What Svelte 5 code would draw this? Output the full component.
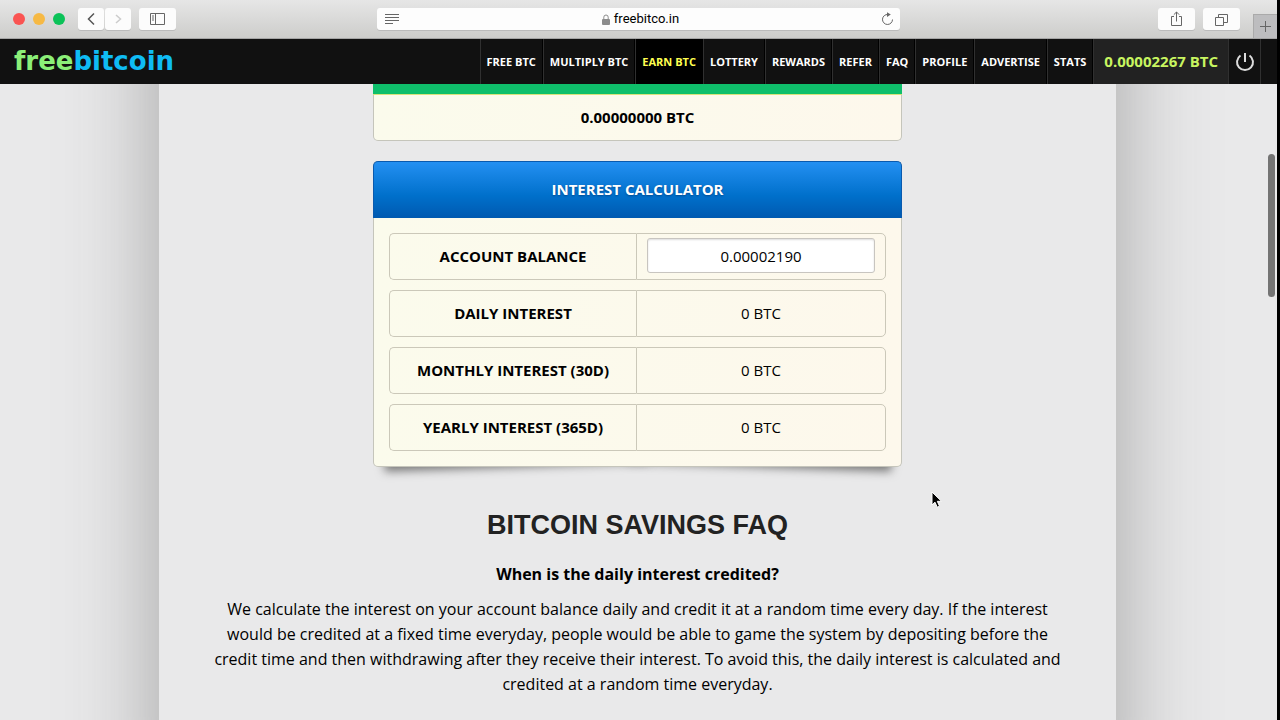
<script lang="ts">
	type Tlink = {
		label: string;
		href: string;
		active?: boolean;
	};

	type Tinterest = {
		id: string;
		label: string;
		value: string;
	};

	const links: Tlink[] = [
		{ label: 'FREE BTC', href: '#free' },
		{ label: 'MULTIPLY BTC', href: '#multiply' },
		{ label: 'EARN BTC', href: '#earn', active: true },
		{ label: 'LOTTERY', href: '#lottery' },
		{ label: 'REWARDS', href: '#rewards' },
		{ label: 'REFER', href: '#refer' },
		{ label: 'FAQ', href: '#faq' },
		{ label: 'PROFILE', href: '#profile' },
		{ label: 'ADVERTISE', href: '#advertise' },
		{ label: 'STATS', href: '#stats' }
	];

	const interests: Tinterest[] = [
		{ id: 'daily', label: 'DAILY INTEREST', value: '0 BTC' },
		{ id: 'monthly', label: 'MONTHLY INTEREST (30D)', value: '0 BTC' },
		{ id: 'yearly', label: 'YEARLY INTEREST (365D)', value: '0 BTC' }
	];

	let balance = $state('0.00002190');
</script>

<div class="window">
	<header class="toolbar">
		<div class="tools">
			<div class="lights">
				<button class="light red" aria-label="Close"></button>
				<button class="light yellow" aria-label="Minimize"></button>
				<button class="light green" aria-label="Zoom"></button>
			</div>
			<div class="history">
				<button class="tool" aria-label="Back">
					<svg width="10" height="14" viewBox="0 0 10 14"><path d="M8 1.500 2.500 7 8 12.500" /></svg>
				</button>
				<button class="tool faded" aria-label="Forward">
					<svg width="10" height="14" viewBox="0 0 10 14"><path d="M3 3l4.500 4L3 11" /></svg>
				</button>
			</div>
			<button class="tool wide" aria-label="Show sidebar">
				<svg width="16" height="14" viewBox="0 0 16 14">
					<path d="M.5 1.500h14v11H.5zM5.500 1.500v11M2 4h2M2 6h2M2 8h2" />
				</svg>
			</button>
		</div>

		<div class="address">
			<svg class="reader" width="15" height="12" viewBox="0 0 15 12">
				<path d="M0 1.500h14M0 4.500h14M0 7.500h14M0 10.500h8" />
			</svg>
			<span class="site">
				<svg width="8" height="11" viewBox="0 0 8 11">
					<rect x="0" y="5" width="8" height="6" rx="1" fill="#8c8c8c" stroke="none" />
					<path d="M1.800 5.500V3.200a2.200 2.200 0 0 1 4.400 0v2.300" stroke="#8c8c8c" />
				</svg>
				freebitco.in
			</span>
			<button class="reload" aria-label="Reload">
				<svg width="13" height="14" viewBox="0 0 13 14">
					<path d="M7 2.500a5 5 0 1 0 4.500 5" />
					<path d="M6 .2 9.800 2.500 6 5z" fill="#666" stroke="none" />
				</svg>
			</button>
		</div>

		<div class="tools right">
			<button class="tool wide" aria-label="Share">
				<svg width="13" height="16" viewBox="0 0 13 16">
					<path d="M4 5.500H1.500v9h10v-9H9M6.500 10.500V1M3.800 3.700 6.500 1l2.700 2.700" />
				</svg>
			</button>
			<button class="tool wide" aria-label="Show tabs">
				<svg width="13" height="13" viewBox="0 0 13 13">
					<path d="M.5 4.500h8v8h-8zM3.500 4.500v-3h9v8h-4" />
				</svg>
			</button>
			<button class="newtab" aria-label="New tab">
				<svg width="13" height="13" viewBox="0 0 13 13"><path d="M6.500 1v11M1 6.500h11" /></svg>
			</button>
		</div>
	</header>

	<nav class="menu">
		<a class="logo" href="#home">free<span>bitcoin</span></a>
		{#each links as link}
			<a class="item" class:active={link.active} href={link.href}>{link.label}</a>
		{/each}
		<a class="funds" href="#balance">0.00002267 BTC</a>
		<button class="power" aria-label="Log out">
			<svg width="20" height="20" viewBox="0 0 20 20">
				<path d="M5.500 3.500A8 8 0 1 0 14.500 3.500M10 1v9" />
			</svg>
		</button>
	</nav>

	<div class="viewport">
		<main class="page">
			<section class="panel total">
				<div class="strip"></div>
				<p>0.00000000 BTC</p>
			</section>

			<section class="panel calculator">
				<h3>INTEREST CALCULATOR</h3>
				<table>
					<tbody>
						<tr>
							<th scope="row"><label for="balance">ACCOUNT BALANCE</label></th>
							<td><input id="balance" type="text" bind:value={balance} /></td>
						</tr>
						{#each interests as row (row.id)}
							<tr>
								<th scope="row">{row.label}</th>
								<td>{row.value}</td>
							</tr>
						{/each}
					</tbody>
				</table>
			</section>

			<section class="faq">
				<h2>BITCOIN SAVINGS FAQ</h2>
				<h4>When is the daily interest credited?</h4>
				<p>
					We calculate the interest on your account balance daily and credit it at a random time every
					day. If the interest would be credited at a fixed time everyday, people would be able to game
					the system by depositing before the credit time and then withdrawing after they receive their
					interest. To avoid this, the daily interest is calculated and credited at a random time
					everyday.
				</p>
			</section>
		</main>
		<div class="scrollbar"></div>
		<svg class="cursor" width="12" height="18" viewBox="0 0 12 18">
			<path d="M1 1v13l3-2.800 2.200 5 2.300-1-2.200-4.900h4.200z" />
		</svg>
	</div>
</div>

<style>
	:global(body) {
		margin: 0;
		background: #000;
		font-family: 'Open Sans', 'Noto Sans', sans-serif;
		color: #000;
	}

	button {
		margin: 0;
		padding: 0;
		border: 0;
		background: none;
	}

	a {
		text-decoration: none;
	}

	svg {
		display: block;
		fill: none;
		stroke: #666;
	}

	.window {
		display: flex;
		flex-direction: column;
		height: 100vh;
		margin-right: 3px;
		overflow: hidden;
	}

	.toolbar {
		display: grid;
		grid-template-columns: 1fr 41% 1fr;
		align-items: center;
		flex: none;
		height: 39px;
		box-sizing: border-box;
		border-bottom: 1px solid #a5a5a5;
		background: linear-gradient(#e6e6e6, #cdcdcb);
	}

	.tools {
		display: flex;
		align-items: center;
		padding-left: 13px;
	}

	.tools.right {
		justify-content: flex-end;
		align-self: stretch;
		gap: 8px;
	}

	.lights {
		display: flex;
		gap: 8px;
		margin-right: 13px;
	}

	.light {
		width: 12px;
		height: 12px;
		border-radius: 50%;
	}

	.red {
		background: #fa5452;
	}

	.yellow {
		background: #f6b944;
	}

	.green {
		background: #0bc258;
	}

	.history {
		display: flex;
		gap: 1px;
		margin-right: 8px;
	}

	.tool {
		display: flex;
		align-items: center;
		justify-content: center;
		width: 26px;
		height: 22px;
		border-radius: 3px;
		background: #fcfcfc;
		box-shadow: 0 1px 0 #bbb;
	}

	.tool.wide {
		width: 37px;
	}

	.history svg {
		stroke: #555;
		stroke-width: 1.5;
	}

	.history .faded svg {
		stroke: #ccc;
	}

	.address {
		display: flex;
		align-items: center;
		justify-content: space-between;
		height: 22px;
		padding: 0 6px 0 8px;
		border-radius: 3px;
		background: #fdfdfd;
		box-shadow: 0 1px 0 #bbb;
	}

	.site {
		display: flex;
		align-items: center;
		gap: 4px;
		font: 13px/22px Roboto, 'Liberation Sans', sans-serif;
	}

	.newtab {
		display: flex;
		align-items: center;
		justify-content: center;
		align-self: flex-end;
		width: 24px;
		height: 24px;
		margin-left: 5px;
		border: solid #aaa;
		border-width: 1px 0 0 1px;
		background: #bdbdbf;
	}

	.menu {
		position: relative;
		z-index: 1;
		display: flex;
		flex: none;
		height: 45px;
		padding-right: 16px;
		background: #111;
		font-weight: 700;
		line-height: 45px;
	}

	.logo {
		margin-right: auto;
		padding-left: 14px;
		font-family: 'DejaVu Sans', sans-serif;
		font-size: 26px;
		color: #8cef78;
	}

	.logo span {
		color: #0fbcf4;
	}

	.item {
		padding: 0 6px;
		border: solid #303030;
		border-width: 0 1px;
		border-right-color: #000;
		font-size: 11px;
		color: #fff;
	}

	.active {
		background: #000;
		color: #ffff50;
	}

	.funds {
		padding: 0 10px;
		border-left: 1px solid #303030;
		background: #222;
		font-size: 15px;
		color: #c8f560;
	}

	.power {
		display: flex;
		align-items: center;
		justify-content: center;
		width: 33px;
		border: solid #303030;
		border-width: 0 1px;
	}

	.power svg {
		stroke: #ddd;
		stroke-width: 2;
	}

	.viewport {
		position: relative;
		flex: 1;
		min-height: 0;
		padding-right: 2px;
		overflow: hidden;
		background: #e9e9ea;
	}

	.page {
		position: relative;
		z-index: 0;
		box-sizing: border-box;
		max-width: 957px;
		min-height: calc(100% + 200px);
		margin: -100px auto 0;
		padding: 100px 50px;
		background: #e9e9ea;
		box-shadow: 0 0 90px #a2a2a2;
		text-align: center;
	}

	.panel {
		position: relative;
		box-sizing: border-box;
		max-width: 529px;
		margin: 0 auto 20px;
		border: 1px solid #c5c5bb;
		border-radius: 5px;
		background: linear-gradient(90deg, #fbfbec, #fdf8ec);
		font-size: 15px;
	}

	.panel p {
		margin: 0;
		font-weight: 700;
		line-height: 45px;
	}

	.total {
		border-top: 0;
		border-radius: 0 0 5px 5px;
	}

	.strip {
		height: 11px;
		margin: 0 -1px;
		box-sizing: border-box;
		border-bottom: 1px solid #d8e27c;
		background: #0fbf6b;
	}

	.calculator {
		border-top: 0;
		margin-bottom: 38px;
	}

	.calculator::before,
	.calculator::after {
		content: '';
		position: absolute;
		z-index: -1;
		bottom: 9px;
		left: 10px;
		width: 50%;
		height: 20px;
		box-shadow: 0 10px 10px #777;
		transform: rotate(-2deg);
	}

	.calculator::after {
		right: 10px;
		left: auto;
		transform: rotate(2deg);
	}

	h3 {
		box-sizing: border-box;
		height: 57px;
		margin: 0 -1px;
		border: 1px solid #0a5aae;
		border-bottom: 0;
		border-radius: 5px 5px 0 0;
		background: linear-gradient(#2490f2, #0070cb 60%, #0059b0);
		font-size: 15px;
		line-height: 55px;
		color: #fff;
		text-shadow: 0 1px 2px #004a90;
	}

	table {
		width: calc(100% - 30px);
		margin: 0 auto;
		padding: 5px 0;
		border-spacing: 0 10px;
		table-layout: fixed;
	}

	th,
	td {
		box-sizing: border-box;
		height: 47px;
		padding: 0 10px 2px;
		border: 1px solid #cbc8b9;
	}

	th {
		width: 49.7%;
		border-right: 0;
		border-radius: 5px 0 0 5px;
	}

	td {
		border-radius: 0 5px 5px 0;
	}

	input {
		display: block;
		box-sizing: border-box;
		width: 100%;
		height: 35px;
		padding: 0;
		border: 1px solid #c8c5c0;
		border-radius: 3px;
		background: #fff;
		box-shadow: inset 0 1px 2px #ddd;
		font: inherit;
		text-align: center;
	}

	h2 {
		margin: 0;
		font: 700 27px/40px 'Liberation Sans', Arial, sans-serif;
		color: #222;
	}

	h4 {
		margin: 17px 0 10px;
		font-size: 16px;
		line-height: 25px;
	}

	.faq p {
		margin: 0;
		font-size: 16px;
		line-height: 25px;
	}

	.scrollbar {
		position: absolute;
		top: 70px;
		right: 2px;
		width: 7px;
		height: 143px;
		border-radius: 4px;
		background: #747474;
	}

	.cursor {
		position: absolute;
		top: 407px;
		left: 931px;
	}

	.cursor path {
		fill: #000;
		stroke: #fff;
	}
</style>
